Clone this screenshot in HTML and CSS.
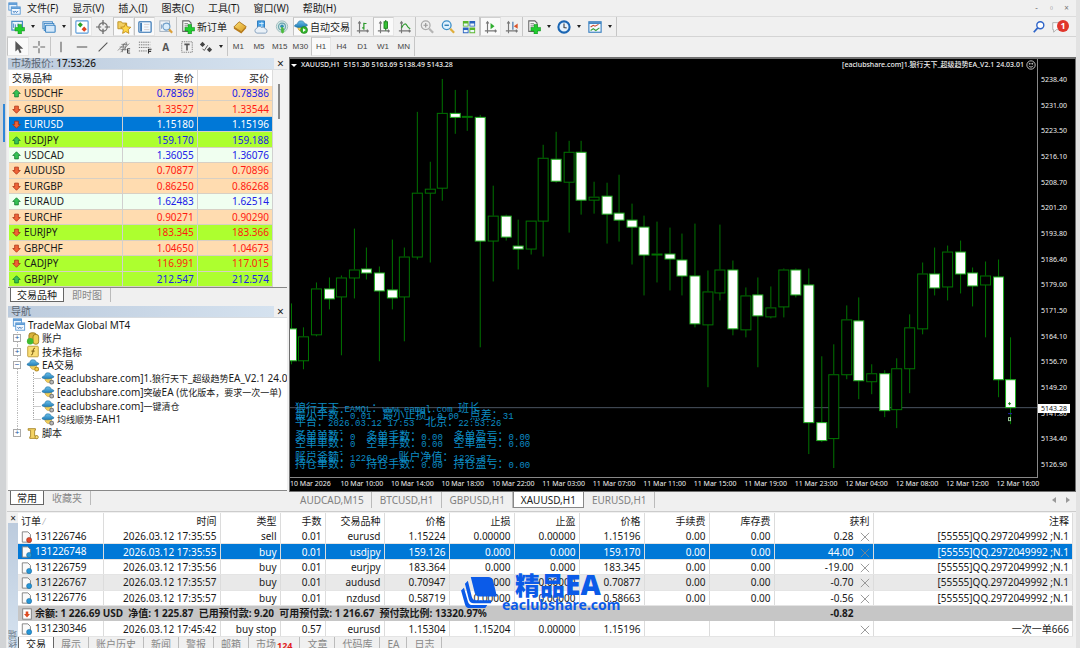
FILE: index.html
```html
<!DOCTYPE html>
<html lang="zh-CN">
<head>
<meta charset="utf-8">
<title>TradeMax Global MT4</title>
<link rel="stylesheet" href="styles.css">
</head>
<body>
<svg class="defs" aria-hidden="true">
  <defs>
    <linearGradient id="gHat" x1="0" y1="0" x2="0" y2="1"><stop offset="0" stop-color="#6cc0ea"/><stop offset="1" stop-color="#1f7db8"/></linearGradient>
    <linearGradient id="gGold" x1="0" y1="0" x2="1" y2="1"><stop offset="0" stop-color="#fbe07a"/><stop offset="1" stop-color="#d99a1c"/></linearGradient>
  </defs>
  <symbol id="plus" viewBox="0 0 16 16"><path d="M8 5h4v3.500h3.500v4H12V16H8v-3.500H4.500v-4H8z" fill="#22cc30" stroke="#0a8a16" stroke-width=".6"/></symbol>
  <symbol id="app" viewBox="0 0 16 16"><rect x="1" y="1" width="10" height="9" fill="#e8f3fd" stroke="#4a8fd0"/><path d="M1 2.500h10" stroke="#4a8fd0" stroke-width="2"/><rect x="4" y="6" width="11" height="9" fill="#f2f8ff" stroke="#4a8fd0"/><path d="M4 7.500h11" stroke="#4a8fd0" stroke-width="2"/><path d="M6 11l1.500 2 1.500-2 1.500 2 2-2" fill="none" stroke="#2c6cb4"/></symbol>
  <symbol id="newchart" viewBox="0 0 16 16"><rect x="1" y="1.500" width="12" height="10" fill="#eef6fd" stroke="#3b85c0" stroke-width="1.300"/><path d="M3 9V4M5 5v3M8 4v3" stroke="#3b85c0"/><use href="#plus"/></symbol>
  <symbol id="profiles" viewBox="0 0 16 16"><rect x="1" y="2" width="11" height="8" fill="#cfe3f5" stroke="#3f86c4"/><rect x="2.500" y="4" width="11" height="8" fill="#e3f0fb" stroke="#3f86c4"/><rect x="4" y="6" width="11" height="8" rx="1" fill="#d4e8fa" stroke="#3f86c4" stroke-width="1.300"/></symbol>
  <symbol id="watch" viewBox="0 0 16 16"><rect x="1" y="1" width="14" height="14" rx="1" fill="#fff" stroke="#5b9bd8" stroke-width="1.300"/><path d="M6 2.500L9 5.500 6 8.500 3 5.500z" fill="#29a329"/><path d="M10.500 7.500l3 3-3 3-3-3z" fill="#e0431c"/></symbol>
  <symbol id="cross" viewBox="0 0 16 16"><circle cx="8" cy="8" r="4.800" fill="none" stroke="#777" stroke-width="1.400"/><path d="M8 0v6M8 10v6M0 8h6M10 8h6" stroke="#666" stroke-width="1.400"/></symbol>
  <symbol id="star" viewBox="0 0 16 16"><path d="M1 2h4l1 1.500h5V10H1z" fill="#f2cf63" stroke="#b98d1e"/><path d="M10 4l1.800 3.800 4 .5-3 2.800.8 4.200-3.600-2-3.600 2 .8-4.200-3-2.800 4-.5z" fill="#ffd84a" stroke="#b98310" stroke-width=".9"/></symbol>
  <symbol id="term" viewBox="0 0 16 16"><rect x="1" y="2" width="14" height="12" rx="1" fill="#f3f9ff" stroke="#2d6fb0" stroke-width="1.300"/><path d="M3.500 3v10" stroke="#2d6fb0" stroke-width="2"/><path d="M7 5h6M7 8h5M7 11h6" stroke="#d5c9c9"/></symbol>
  <symbol id="tester" viewBox="0 0 16 16"><rect x="1" y="1" width="11" height="12" fill="#f0f4f8" stroke="#9ab"/><path d="M3 5v5M5 4v4" stroke="#6b93bd"/><circle cx="8.500" cy="7.500" r="4" fill="#d9ecfb" stroke="#6d9cc8" stroke-width="1.300"/><path d="M11.500 10.500L15 14.500" stroke="#dca03a" stroke-width="2.400"/></symbol>
  <symbol id="order" viewBox="0 0 16 16"><path d="M2 1h7l2.500 2.500V13H2z" fill="#fafafa" stroke="#666" stroke-width="1.200"/><path d="M4 4h4M4 6h5M4 8h3" stroke="#888"/><use href="#plus"/></symbol>
  <symbol id="book" viewBox="0 0 16 16"><path d="M1 8l6-6 8 5.500-5.500 6z" fill="url(#gGold)" stroke="#a8741a"/><path d="M1 8v2l8.500 5.500L15 9.500v-2l-5.500 6z" fill="#b87a18"/></symbol>
  <symbol id="cloud" viewBox="0 0 16 16"><path d="M4 1h8v8H4z" fill="#48a2e6" stroke="#2274b8"/><path d="M9 2v6M6 4h5" stroke="#d9f0ff"/><path d="M3.500 15a2.800 2.800 0 0 1-.3-5.500A3 3 0 0 1 8.500 8.500a3 3 0 0 1 4.200 1.400 2.600 2.600 0 0 1 .3 5.100z" fill="#e9f0f7" stroke="#7f9dbb"/></symbol>
  <symbol id="signal" viewBox="0 0 16 16"><circle cx="8" cy="7.500" r="6.500" fill="#d5e6e6" stroke="#9ab9b9"/><circle cx="8" cy="7.500" r="4" fill="none" stroke="#6ba6ad" stroke-width="1.300"/><circle cx="8" cy="7" r="2" fill="#2f8fb0"/><path d="M8 8c2 2 3 4 1 7-2 0-2-4-1-7z" fill="#4dba3c" stroke="#4dba3c"/></symbol>
  <symbol id="ea" viewBox="0 0 16 16"><path d="M4 6.500c0 4 2 6.500 5 6.500 2 0 3.500-2 3.500-6.500z" fill="#f3cf58" stroke="#b8902c" stroke-width=".7"/><path d="M.5 7C1 5 3 4.800 4 4.500 4.500 1.500 6 1 8 1s3.500.8 4 3c1 .2 3 .5 3.500 2C13 8.500 4 9.500.5 7z" fill="url(#gHat)" stroke="#1c6c9f" stroke-width=".7"/></symbol>
  <symbol id="auto" viewBox="0 0 16 16"><use href="#ea"/><circle cx="11.500" cy="11.500" r="4" fill="#35b52d" stroke="#147414" stroke-width=".6"/><path d="M10.300 9.300v4.400l3.300-2.200z" fill="#fff"/></symbol>
  <symbol id="eagear" viewBox="0 0 16 16"><use href="#ea"/><circle cx="12.500" cy="12.500" r="2.300" fill="#bbb" stroke="#777" stroke-width="1.300"/></symbol>
  <symbol id="eagold" viewBox="0 0 16 16"><use href="#ea"/><circle cx="12.500" cy="12.500" r="2.300" fill="#f5d04c" stroke="#b58a1d" stroke-width="1.300"/></symbol>
  <symbol id="axes" viewBox="0 0 16 16"><path d="M4 2v13M1 12.500h13M2.500 4L4 2l1.500 2M12.500 11l1.500 1.500-1.500 1.500" fill="none" stroke="#777" stroke-width="1.300"/></symbol>
  <symbol id="bars" viewBox="0 0 16 16"><use href="#axes"/><path d="M9 3v8M9 4h3M7 9h2" stroke="#2a9a2a" stroke-width="1.400"/></symbol>
  <symbol id="candle" viewBox="0 0 16 16"><use href="#axes"/><path d="M10 0v12" stroke="#187d18" stroke-width="1.200"/><rect x="8" y="2" width="4" height="7.500" fill="#35c235" stroke="#187d18"/></symbol>
  <symbol id="line" viewBox="0 0 16 16"><use href="#axes"/><path d="M4 9c3-6 5-5 6-3s2 3 4 4" fill="none" stroke="#2a9a2a" stroke-width="1.300"/></symbol>
  <symbol id="zin" viewBox="0 0 16 16"><circle cx="6.500" cy="6" r="5" fill="#eee" stroke="#aaa" stroke-width="1.400"/><path d="M6.500 3.500v5M4 6h5" stroke="#999" stroke-width="1.400"/><path d="M10.500 10l4.500 4.500" stroke="#b5b5b5" stroke-width="2.600"/></symbol>
  <symbol id="zout" viewBox="0 0 16 16"><circle cx="6.500" cy="6" r="5" fill="#dff1fd" stroke="#3c8fc8" stroke-width="1.500"/><path d="M4 6h5" stroke="#2474ae" stroke-width="1.500"/><path d="M10.500 10l4.500 4.500" stroke="#dfae3c" stroke-width="2.600"/></symbol>
  <symbol id="tile" viewBox="0 0 16 16"><path d="M1 1h6.500v6.500H1zM8.500 8.500H15V15H8.500z" fill="#58b52c"/><path d="M8.500 1H15v6.500H8.500zM1 8.500h6.500V15H1z" fill="#2a63c0"/><path d="M2 4h4.500v2.500H2zM9.500 4H14v2.500H9.500zM2 11.500h4.500V14H2zM9.500 11.500H14V14H9.500z" fill="#eef6fb"/></symbol>
  <symbol id="scroll" viewBox="0 0 16 16"><use href="#axes"/><path d="M7.500 3.500v7L12 7z" fill="#2fae2f"/></symbol>
  <symbol id="shift" viewBox="0 0 16 16"><use href="#axes"/><path d="M9 2v9" stroke="#3a6fa8" stroke-width="1.300"/><path d="M14.500 4v6L10 7z" fill="#d9552c"/></symbol>
  <symbol id="clock" viewBox="0 0 16 16"><circle cx="8" cy="8" r="6.400" fill="#e6f3fd" stroke="#1b66b3" stroke-width="2.400"/><path d="M8 4v4.500l3 .5" fill="none" stroke="#444" stroke-width="1.300"/></symbol>
  <symbol id="tpl" viewBox="0 0 16 16"><rect x="1" y="2" width="14" height="12" fill="#f5faff" stroke="#3a80c0" stroke-width="1.300"/><path d="M1 3.500h14" stroke="#3a80c0" stroke-width="2"/><path d="M3 8l3-2 2 1 4-2" fill="none" stroke="#c8482a" stroke-width="1.200"/><path d="M3 12l3-2 3 2 4-3" fill="none" stroke="#38a038" stroke-width="1.200"/></symbol>
  <symbol id="cursor" viewBox="0 0 16 16"><path d="M5 1v12l3-2.500L10 15l2-1-2-4h4z" fill="#555"/></symbol>
  <symbol id="cross2" viewBox="0 0 16 16"><path d="M8 1v5.500M8 9.500V15M1 8h5.500M9.500 8H15" stroke="#666" stroke-width="1.300"/></symbol>
  <symbol id="vline" viewBox="0 0 16 16"><path d="M8 2v12" stroke="#555" stroke-width="1.200"/></symbol>
  <symbol id="hline" viewBox="0 0 16 16"><path d="M2 8h12" stroke="#555" stroke-width="1.200"/></symbol>
  <symbol id="trend" viewBox="0 0 16 16"><path d="M3 13L13 3" stroke="#555" stroke-width="1.200"/></symbol>
  <symbol id="chan" viewBox="0 0 16 16"><path d="M1 12L11 2M4 14L14 4M3 8h6M5 5h7M4 11h7M6 14L8 4M9 12l2-9" stroke="#666" stroke-width=".8"/><path d="M15 10h-3v5h3M12 12.500h2.500" fill="none" stroke="#333"/></symbol>
  <symbol id="fibo" viewBox="0 0 16 16"><path d="M1 2.500h13M1 5.500h13M1 8.500h13M1 12.500h9" stroke="#666" stroke-dasharray="1.500 1"/><path d="M12 15.500V10.500h3.500M12 13h3" fill="none" stroke="#333" stroke-width="1.200"/></symbol>
  <symbol id="tbox" viewBox="0 0 16 16"><rect x="2" y="2" width="12" height="12" fill="none" stroke="#777" stroke-dasharray="1.500 1"/><path d="M5 5h6M8 5v7" stroke="#555" stroke-width="1.800"/></symbol>
  <symbol id="arrows" viewBox="0 0 16 16"><path d="M4 2l3 3-3 3-3-3zM12 8l3 3-3 3-3-3z" fill="#444"/><path d="M4 10l2 2 4-6" fill="none" stroke="#444"/></symbol>
  <symbol id="search" viewBox="0 0 16 16"><circle cx="9.500" cy="6" r="4" fill="#fff" stroke="#2e64c8" stroke-width="1.600"/><path d="M6.500 9L2 14" stroke="#2e64c8" stroke-width="2"/></symbol>
  <symbol id="bellicon" viewBox="0 0 16 16"><path d="M2 3h9v8H6l-3 3v-3H2z" fill="#fafafa" stroke="#aaa"/></symbol>
  <symbol id="up" viewBox="0 0 12 12"><path d="M6 1l5 5H8.500v4.500h-5V6H1z" fill="#36c255" stroke="#12772b"/></symbol>
  <symbol id="down" viewBox="0 0 12 12"><path d="M6 11L1 6h2.500V1.500h5V6H11z" fill="#ef6338" stroke="#a92a0c"/></symbol>
  <symbol id="acct" viewBox="0 0 16 16"><rect x="3" y="1" width="9" height="12" rx="3" fill="#d8b13a" stroke="#8d6f12"/><rect x="8" y="3" width="7" height="12" rx="3" fill="#f0ce50" stroke="#8d6f12"/><circle cx="4.500" cy="11.500" r="4" fill="#41bb33"/></symbol>
  <symbol id="func" viewBox="0 0 16 16"><rect x="1.500" y="1.500" width="13" height="13" rx="1" fill="#fadf78" stroke="#b58f24"/><path d="M10.500 4c-2-.5-2 1-2.500 4s-.8 5-2.500 4M6 7.500h4" fill="none" stroke="#70520c" stroke-width="1.200"/></symbol>
  <symbol id="script" viewBox="0 0 16 16"><path d="M2 2h9v2h-1v7h3v3H4v-2h1V4H2z" fill="#f3d264" stroke="#a17e1c"/><circle cx="12.500" cy="12.500" r="2" fill="#f7df7c" stroke="#a17e1c"/></symbol>
  <symbol id="docbuy" viewBox="0 0 14 14"><path d="M1.500 1H8l3 3v9H1.500z" fill="#fafafa" stroke="#777"/><circle cx="9.500" cy="10.500" r="3" fill="#2596d8" stroke="#0f6395" stroke-width=".6"/></symbol>
  <symbol id="docsell" viewBox="0 0 14 14"><path d="M1.500 1H8l3 3v9H1.500z" fill="#fafafa" stroke="#777"/><circle cx="9.500" cy="10.500" r="3" fill="#e0482c" stroke="#8d220e" stroke-width=".6"/></symbol>
  <symbol id="bal" viewBox="0 0 14 14"><rect x="2" y="1" width="10" height="12" fill="#fff" stroke="#777"/><path d="M7 11L3.500 7H5.500V4h3v3h2z" fill="#dd4a20"/></symbol>
  <symbol id="x" viewBox="0 0 12 12"><path d="M1 1l10 10M11 1L1 11" stroke="#888" stroke-width="1"/></symbol>
</svg>

<div class="gutter"><i></i></div>
<div class="app">
  <header>
    <nav class="menu">
      <svg class="ic"><use href="#app"/></svg>
      <button>文件(F)</button><button>显示(V)</button><button>插入(I)</button><button>图表(C)</button><button>工具(T)</button><button>窗口(W)</button><button>帮助(H)</button>
      <span class="winbtns"><button>-</button><button>▫</button><button>×</button></span>
    </nav>
    <div class="toolbar">
      <div class="group g-file"><button class="drop" aria-label="新图表"><svg class="ic"><use href="#newchart"/></svg></button><button class="drop" aria-label="配置"><svg class="ic"><use href="#profiles"/></svg></button></div>
      <div class="group g-panels"><button class="on" aria-label="市场报价"><svg class="ic"><use href="#watch"/></svg></button><button aria-label="数据窗口"><svg class="ic"><use href="#cross"/></svg></button><button class="on" aria-label="导航"><svg class="ic"><use href="#star"/></svg></button><button class="on" aria-label="终端"><svg class="ic"><use href="#term"/></svg></button><button aria-label="测试"><svg class="ic"><use href="#tester"/></svg></button></div>
      <div class="group g-trade"><button class="wide"><svg class="ic"><use href="#order"/></svg>新订单</button><button aria-label="编辑器"><svg class="ic"><use href="#book"/></svg></button><button aria-label="云"><svg class="ic"><use href="#cloud"/></svg></button><button aria-label="信号"><svg class="ic"><use href="#signal"/></svg></button><button class="wide on"><svg class="ic"><use href="#auto"/></svg>自动交易</button></div>
      <div class="group g-three"><button aria-label="柱状图"><svg class="ic"><use href="#bars"/></svg></button><button class="on" aria-label="蜡烛图"><svg class="ic"><use href="#candle"/></svg></button><button aria-label="折线图"><svg class="ic"><use href="#line"/></svg></button></div>
      <div class="group g-three"><button aria-label="放大"><svg class="ic"><use href="#zin"/></svg></button><button aria-label="缩小"><svg class="ic"><use href="#zout"/></svg></button><button aria-label="平铺"><svg class="ic"><use href="#tile"/></svg></button></div>
      <div class="group g-two"><button class="on" aria-label="自动滚动"><svg class="ic"><use href="#scroll"/></svg></button><button aria-label="图表平移"><svg class="ic"><use href="#shift"/></svg></button></div>
      <div class="group g-drops"><button class="drop" aria-label="指标"><svg class="ic"><use href="#order"/></svg></button><button class="drop" aria-label="周期"><svg class="ic"><use href="#clock"/></svg></button><button class="drop" aria-label="模板"><svg class="ic"><use href="#tpl"/></svg></button></div>
      <div class="right"><button aria-label="搜索"><svg class="ic"><use href="#search"/></svg></button><button class="bell" aria-label="通知"><svg class="ic"><use href="#bellicon"/></svg><span class="badge">1</span></button></div>
    </div>
    <div class="toolbar second">
      <div class="group g-ptr"><button class="on" aria-label="光标"><svg class="ic"><use href="#cursor"/></svg></button><button aria-label="十字线"><svg class="ic"><use href="#cross2"/></svg></button></div>
      <div class="group g-draw"><button aria-label="垂直线"><svg class="ic"><use href="#vline"/></svg></button><button aria-label="水平线"><svg class="ic"><use href="#hline"/></svg></button><button aria-label="趋势线"><svg class="ic"><use href="#trend"/></svg></button><button aria-label="通道"><svg class="ic"><use href="#chan"/></svg></button><button aria-label="斐波那契"><svg class="ic"><use href="#fibo"/></svg></button><button class="letter">A</button><button aria-label="文本标签"><svg class="ic"><use href="#tbox"/></svg></button><button class="drop" aria-label="箭头"><svg class="ic"><use href="#arrows"/></svg></button></div>
      <div class="group g-tf"><button>M1</button><button>M5</button><button>M15</button><button>M30</button><button class="on">H1</button><button>H4</button><button>D1</button><button>W1</button><button>MN</button></div>
    </div>
  </header>

  <div class="workspace">
    <aside>
      <section class="panel market">
        <h2><span>市场报价: <b>17:53:26</b></span><button aria-label="关闭">×</button></h2>
        <div class="quotes">
          <table>
            <thead><tr><th>交易品种</th><th>卖价</th><th>买价</th></tr></thead>
            <tbody>
              <tr class="peach up"><td><svg><use href="#up"/></svg>USDCHF</td><td>0.78369</td><td>0.78386</td></tr>
              <tr class="peach dn"><td><svg><use href="#down"/></svg>GBPUSD</td><td>1.33527</td><td>1.33544</td></tr>
              <tr class="sel"><td><svg><use href="#down"/></svg>EURUSD</td><td>1.15180</td><td>1.15196</td></tr>
              <tr class="lime up"><td><svg><use href="#up"/></svg>USDJPY</td><td>159.170</td><td>159.188</td></tr>
              <tr class="mint up"><td><svg><use href="#up"/></svg>USDCAD</td><td>1.36055</td><td>1.36076</td></tr>
              <tr class="peach dn"><td><svg><use href="#down"/></svg>AUDUSD</td><td>0.70877</td><td>0.70896</td></tr>
              <tr class="peach dn"><td><svg><use href="#down"/></svg>EURGBP</td><td>0.86250</td><td>0.86268</td></tr>
              <tr class="mint up"><td><svg><use href="#up"/></svg>EURAUD</td><td>1.62483</td><td>1.62514</td></tr>
              <tr class="peach dn"><td><svg><use href="#down"/></svg>EURCHF</td><td>0.90271</td><td>0.90290</td></tr>
              <tr class="lime dn"><td><svg><use href="#down"/></svg>EURJPY</td><td>183.345</td><td>183.366</td></tr>
              <tr class="peach dn"><td><svg><use href="#down"/></svg>GBPCHF</td><td>1.04650</td><td>1.04673</td></tr>
              <tr class="lime dn"><td><svg><use href="#down"/></svg>CADJPY</td><td>116.991</td><td>117.015</td></tr>
              <tr class="lime up"><td><svg><use href="#up"/></svg>GBPJPY</td><td>212.547</td><td>212.574</td></tr>
            </tbody>
          </table>
          <div class="scroll"><i></i></div>
        </div>
        <div class="tabs"><button class="active">交易品种</button><button>即时图</button></div>
      </section>
      <section class="panel navigator">
        <h2><span>导航</span><button aria-label="关闭">×</button></h2>
        <div class="treebox">
          <ul class="tree">
            <li><svg class="ic"><use href="#app"/></svg>TradeMax Global MT4</li>
            <li class="l1"><i class="box">+</i><svg class="ic"><use href="#acct"/></svg>账户</li>
            <li class="l1"><i class="box">+</i><svg class="ic"><use href="#func"/></svg>技术指标</li>
            <li class="l1"><i class="box">−</i><svg class="ic"><use href="#eagold"/></svg>EA交易</li>
            <li class="l2"><svg class="ic"><use href="#eagear"/></svg><span>[eaclubshare.com]1.<small>狼行天下</small>_<small>超级趋势</small>EA_V2.1 24.0</span></li>
            <li class="l2"><svg class="ic"><use href="#eagear"/></svg><span>[eaclubshare.com]<small>突破</small>EA (<small>优化版本，要求一次一单</small>)</span></li>
            <li class="l2"><svg class="ic"><use href="#eagear"/></svg><span>[eaclubshare.com]<small>一键清仓</small></span></li>
            <li class="l2 last"><svg class="ic"><use href="#eagear"/></svg><span><small>均线顺势</small>-EAH1</span></li>
            <li class="l1 end"><i class="box">+</i><svg class="ic"><use href="#script"/></svg>脚本</li>
          </ul>
        </div>
        <div class="tabs"><button class="active">常用</button><button>收藏夹</button></div>
      </section>
    </aside>

    <main>
      <div class="chart">
        <div class="plot">
          <svg id="candles" viewBox="290 59 748 419" preserveAspectRatio="none"></svg>
          <div class="caption"><span><i class="tri"></i>XAUUSD,H1&nbsp; 5151.30 5163.69 5138.49 5143.28</span><span>[eaclubshare.com]1.狼行天下_超级趋势EA_V2.1 24.03.01 <svg viewBox="0 0 12 12"><circle cx="6" cy="6" r="5" fill="none" stroke="#ddd"/><path d="M3.500 7c1 2 4 2 5 0M4 4h1v1H4zM7 4h1v1H7z" fill="none" stroke="#ddd"/></svg></span></div>
          <pre class="comment">狼行天下<samp> EAMQL</samp>：<samp>www.eamql.com </samp>班长
最小手数：<samp>0.01  </samp>最小止损：<samp>0.00  </samp>点差：<samp>31</samp>
平台：<samp>2026.03.12 17:53  </samp>北京：<samp>22:53:26</samp>
<samp>---------</samp>
多单单数：<samp>0  </samp>多单手数：<samp>0.00  </samp>多单盈亏：<samp>0.00</samp>
空单单数：<samp>0  </samp>空单手数：<samp>0.00  </samp>空单盈亏：<samp>0.00</samp>
<samp>---------</samp>
账户金额：<samp>1226.69  </samp>账户净值：<samp>1225.87</samp>
持仓单数：<samp>0  </samp>持仓手数：<samp>0.00  </samp>持仓盈亏：<samp>0.00</samp></pre>
        </div>
        <div class="prices"><span>5238.40</span><span>5231.00</span><span>5223.50</span><span>5216.10</span><span>5208.70</span><span>5201.20</span><span>5193.80</span><span>5186.40</span><span>5179.00</span><span>5171.50</span><span>5164.10</span><span>5156.70</span><span>5149.20</span><span>5141.80</span><span>5134.40</span><span>5126.90</span><b>5143.28</b></div>
        <div class="times"><span>10 Mar 2026</span><span>10 Mar 10:00</span><span>10 Mar 14:00</span><span>10 Mar 18:00</span><span>10 Mar 22:00</span><span>11 Mar 03:00</span><span>11 Mar 07:00</span><span>11 Mar 11:00</span><span>11 Mar 15:00</span><span>11 Mar 19:00</span><span>11 Mar 23:00</span><span>12 Mar 04:00</span><span>12 Mar 08:00</span><span>12 Mar 12:00</span><span>12 Mar 16:00</span></div>
      </div>
      <div class="charttabs"><button>AUDCAD,M15</button><button>BTCUSD,H1</button><button>GBPUSD,H1</button><button class="active">XAUUSD,H1</button><button>EURUSD,H1</button><span><i class="prev"></i><i class="next"></i></span></div>
    </main>
  </div>

  <section class="terminal">
    <div class="side"><button aria-label="关闭">×</button><span>终端</span></div>
    <div class="orders">
      <table>
        <colgroup><col class="c-id"><col class="c-time"><col class="c-type"><col class="c-lot"><col class="c-sym"><col class="c-num"><col class="c-num"><col class="c-num"><col class="c-num"><col class="c-num"><col class="c-num"><col class="c-pl"><col></colgroup>
        <thead><tr><th>订单 <small>⁄</small></th><th>时间</th><th>类型</th><th>手数</th><th>交易品种</th><th>价格</th><th>止损</th><th>止盈</th><th>价格</th><th>手续费</th><th>库存费</th><th>获利</th><th>注释</th></tr></thead>
        <tbody>
          <tr><td><svg><use href="#docsell"/></svg>131226746</td><td>2026.03.12 17:35:55</td><td>sell</td><td>0.01</td><td>eurusd</td><td>1.15224</td><td>0.00000</td><td>0.00000</td><td>1.15196</td><td>0.00</td><td>0.00</td><td>0.28<svg><use href="#x"/></svg></td><td>[55555]QQ.2972049992 ;N.1</td></tr>
          <tr class="sel"><td><svg><use href="#docbuy"/></svg>131226748</td><td>2026.03.12 17:35:55</td><td>buy</td><td>0.01</td><td>usdjpy</td><td>159.126</td><td>0.000</td><td>0.000</td><td>159.170</td><td>0.00</td><td>0.00</td><td>44.00<svg><use href="#x"/></svg></td><td>[55555]QQ.2972049992 ;N.1</td></tr>
          <tr><td><svg><use href="#docbuy"/></svg>131226759</td><td>2026.03.12 17:35:56</td><td>buy</td><td>0.01</td><td>eurjpy</td><td>183.364</td><td>0.000</td><td>0.000</td><td>183.345</td><td>0.00</td><td>0.00</td><td>-19.00<svg><use href="#x"/></svg></td><td>[55555]QQ.2972049992 ;N.1</td></tr>
          <tr class="alt"><td><svg><use href="#docbuy"/></svg>131226767</td><td>2026.03.12 17:35:57</td><td>buy</td><td>0.01</td><td>audusd</td><td>0.70947</td><td>0.00000</td><td>0.00000</td><td>0.70877</td><td>0.00</td><td>0.00</td><td>-0.70<svg><use href="#x"/></svg></td><td>[55555]QQ.2972049992 ;N.1</td></tr>
          <tr><td><svg><use href="#docbuy"/></svg>131226776</td><td>2026.03.12 17:35:57</td><td>buy</td><td>0.01</td><td>nzdusd</td><td>0.58719</td><td>0.00000</td><td>0.00000</td><td>0.58663</td><td>0.00</td><td>0.00</td><td>-0.56<svg><use href="#x"/></svg></td><td>[55555]QQ.2972049992 ;N.1</td></tr>
          <tr class="balance"><td colspan="11"><svg><use href="#bal"/></svg>余额: 1 226.69 USD&nbsp; 净值: 1 225.87&nbsp; 已用预付款: 9.20&nbsp; 可用预付款: 1 216.67&nbsp; 预付款比例: 13320.97%</td><td>-0.82<svg></svg></td><td></td></tr>
          <tr><td><svg><use href="#docbuy"/></svg>131230346</td><td>2026.03.12 17:45:42</td><td>buy stop</td><td>0.57</td><td>eurusd</td><td>1.15304</td><td>1.15204</td><td>0.00000</td><td>1.15196</td><td></td><td></td><td><svg><use href="#x"/></svg></td><td>一次一单666</td></tr>
        </tbody>
      </table>
      <div class="tabs"><button class="active">交易</button><button>展示</button><button>账户历史</button><button>新闻</button><button>警报</button><button>邮箱</button><button>市场<sub>124</sub></button><button>文章</button><button>代码库</button><button>EA</button><button>日志</button></div>
    </div>
    <div class="watermark">
      <svg viewBox="0 0 38 34"><path d="M10 1h18q4 0 5 4l4 16H19q-4 0-5-4z" fill="#0b5be8"/><path d="M7 5l4 16q1 4 5 4h15v3H13q-4 0-5-4L4 8z" fill="#0b5be8"/><path d="M3 12l4 14q1 4 5 4h15l-2 3H9q-4 0-5-4L0 15z" fill="#0b5be8"/></svg>
      <div><strong>精品<em>EA</em></strong><span>eaclubshare.com</span></div>
    </div>
  </section>
</div>
<script src="chart.js"></script>
</body>
</html>
```
FILE: styles.css
```css
* { box-sizing: border-box; }
body {
  margin: 0; display: flex; height: 100vh; overflow: hidden;
  background: #f0f0f0; color: #1a1a1a;
  font: 10px/12px "Noto Sans", "Noto Sans CJK SC", sans-serif;
}
button { border: 0; padding: 0; background: none; font: inherit; color: inherit; white-space: nowrap; }
.defs { position: absolute; width: 0; height: 0; }
.ic { width: 14px; height: 14px; flex: none; display: block; }

.gutter { flex: none; width: 7px; padding: 104px 0 0 3px; background: #d2d4d6; border-right: 1px solid #e8e8e8; }
.gutter i { display: block; width: 2px; height: 38px; background: #2f86d8; }
.app { flex: 1; min-width: 0; display: flex; flex-direction: column; border-right: 4px solid #e2e2e2; }

.menu { display: flex; align-items: center; gap: 14px; height: 17px; padding-left: 1px; border-bottom: 1px solid #dcdcdc; }
.menu .ic { margin-right: -8px; width: 13px; height: 13px; }
.winbtns { margin-left: auto; display: flex; color: #777; font-size: 8px; padding-right: 2px; }
.winbtns button { width: 15px; }

.toolbar { display: flex; height: 20px; padding-left: 2px; border-bottom: 1px solid #d4d4d4; }
.toolbar.second { height: 19px; padding-left: 0; border-bottom: 0; }
.group { display: flex; flex: none; border-right: 1px solid #c6c6c6; }
.toolbar button { flex: 1; display: flex; align-items: center; justify-content: center; border: 1px solid transparent; }
.toolbar .on { background: #fafafa; border-color: #d0d0d0 #e6e6e6 #e6e6e6 #c4c4c4; }
.toolbar .drop { justify-content: flex-start; padding-left: 1px; gap: 6px; }
.drop::after { content: ""; border: 2px solid transparent; border-top: 3px solid #222; border-bottom: 0; }
.toolbar .wide { gap: 2px; flex: none; }
.g-file { width: 62px; }
.g-panels { width: 106px; }
.g-trade { width: 175px; padding-left: 2px; }
.g-trade .wide { padding: 0 1px; }
.g-trade .wide.on { padding: 0; }
.g-three { width: 64px; }
.g-two { width: 43px; }
.g-drops { width: 94px; padding-left: 2px; }
.g-ptr { width: 44px; }
.g-draw { width: 177px; }
.g-draw .drop { flex: none; width: 30px; }
.g-tf { width: 187px; font: 8px/10px "Liberation Sans", sans-serif; color: #444; }
.letter { font-weight: bold; color: #555; }
.right { margin-left: auto; display: flex; gap: 3px; padding-right: 6px; }
.toolbar .right button { flex: none; width: 16px; }
.toolbar .right .bell { position: relative; width: 20px; justify-content: flex-start; }
.badge { position: absolute; right: 0; top: 2px; width: 12px; height: 12px; border-radius: 6px; background: #e0352b; color: #fff; font-weight: bold; font-size: 9px; text-align: center; }

.workspace { flex: 1; min-height: 0; display: flex; }
aside { flex: none; width: 282px; padding: 2px 2px 6px 1px; display: flex; flex-direction: column; gap: 4px; }
.panel { display: flex; flex-direction: column; }
.panel h2 { display: flex; align-items: center; margin: 0; height: 12px; font: inherit; color: #5a6470; border-bottom: 1px solid #d8dce0; }
.panel h2 span { flex: 1; height: 11px; line-height: 11px; padding-left: 3px; background: linear-gradient(90deg, #bccbdd, #d5e2ef); }
.panel h2 b { font-weight: 500; color: #222; }
.panel h2 button { width: 13px; color: #222; font-size: 12px; line-height: 10px; }
.quotes { display: flex; border-bottom: 1px solid #888; }
table { border-collapse: collapse; table-layout: fixed; }
.quotes table { width: 264px; height: 217px; margin-left: 1px; }
th, td { padding: 0 3px; text-align: right; font-weight: normal; line-height: 12px; white-space: nowrap; overflow: hidden; border-right: 1px solid #dcdcdc; }
th { height: 16px; background: #fff; }
.quotes th:first-child, .quotes td:first-child { width: 113px; text-align: left; }
.quotes td { border-bottom: 1px solid #d8d0c4; border-right-color: #d0d0d0; }
.quotes svg { width: 9px; height: 9px; margin-right: 3px; vertical-align: -1px; }
.peach { background: #ffdcb0; }
.lime { background: #adff2f; }
.mint { background: #f0fff0; }
.up td + td { color: #2020e8; }
.dn td + td { color: #ff1a10; }
.sel, .orders .sel { background: #0078d7; color: #fff; }
.scroll { flex: 1; padding: 14px 0 0 5px; background: #f3f3f3; }
.scroll i { display: block; width: 2px; height: 35px; background: #8a8a8a; }
.tabs { display: flex; height: 14px; color: #888; }
.tabs button { padding: 0 8px; border-right: 1px solid #bbb; }
.tabs .active { background: #fff; color: #222; border: 1px solid #666; border-top: 0; padding: 0 6px; }
.panel .tabs { padding-left: 2px; }

.navigator { flex: 1; min-height: 0; }
.treebox { flex: 1; min-height: 0; background: #fff; border-bottom: 1px solid #888; overflow: hidden; }
.tree { list-style: none; margin: 0; padding: 0; height: 122px; display: grid; grid-auto-rows: 1fr; }
.tree li { display: flex; align-items: center; gap: 2px; min-height: 0; padding-left: 4px; white-space: nowrap; position: relative; }
.tree li::before { content: ""; position: absolute; left: 9px; top: 0; bottom: 0; border-left: 1px dotted #bbb; }
.tree li:first-child::before { display: none; }
.tree .end::before { bottom: 50%; }
.tree .ic { height: 13px; }
.tree small { font-size: 9px; }
.tree .l1 { padding-left: 5px; }
.tree .l1 .ic { margin-left: 3px; }
.tree .l2 { padding-left: 33px; }
.tree .l2::after { content: ""; position: absolute; left: 25px; top: 0; height: 100%; width: 7px; border-left: 1px dotted #aaa; background: linear-gradient(#ccc, #ccc) 0 50% / 7px 1px no-repeat; }
.tree .last::after { height: 50%; background-position: 0 100%; }
.box { position: relative; width: 8px; height: 8px; border: 1px solid #aaa; background: #fff; color: #2452a0; font: 8px/6px "Liberation Sans", sans-serif; text-align: center; }

main { flex: 1; min-width: 0; display: flex; flex-direction: column; }
.chart {
  flex: 1; min-height: 0; display: grid; grid-template: 1fr 13px / 1fr 37px;
  background: #000; color: #f0f0f0; margin-top: 1px;
  border: 1px solid #707070; border-width: 2px 1px 1px;
  font-size: 7px; line-height: 10px;
}
.plot { position: relative; border-right: 1px solid #888; border-bottom: 1px solid #888; min-height: 0; }
#candles { position: absolute; width: 100%; height: 100%; }
.caption { position: relative; display: flex; justify-content: space-between; padding: 1px 1px 0 1px; font-weight: 500; }
.caption span { display: flex; align-items: center; }
.caption svg { width: 10px; height: 10px; margin-left: 2px; }
.tri { border: 3px solid transparent; border-top: 3px solid #fff; border-bottom: 0; margin-right: 4px; }
.comment { position: absolute; left: 5px; bottom: 10px; margin: 0; color: #0c8cc4; font: 11px/7px "Noto Sans CJK SC", sans-serif; }
.comment samp { font: 9px/0 "Liberation Mono", monospace; }
.prices { position: relative; display: flex; flex-direction: column; justify-content: space-between; padding: 16px 0 8px 3px; }
.prices b { position: absolute; left: 0; top: 345px; width: 32px; height: 9px; padding-left: 3px; line-height: 9px; background: #fff; color: #111; font-weight: normal; }
.times { grid-column: 1 / 3; display: flex; padding-right: 28px; }
.times span { flex: 1; min-width: 0; white-space: nowrap; line-height: 12px; }
.charttabs { display: flex; height: 19px; padding-bottom: 3px; color: #808080; }
.charttabs button { padding: 0 7px 0 8px; border-right: 1px solid #bbb; }
.charttabs button:first-child { padding-left: 11px; }
.charttabs .active { background: #fff; color: #222; border: 1px solid #888; border-top: 0; padding: 0 7px; }
.charttabs span { margin-left: auto; display: flex; align-items: center; gap: 10px; padding-right: 6px; }
.prev, .next { border: 3px solid transparent; }
.prev { border-right: 4px solid #999; border-left: 0; }
.next { border-left: 4px solid #999; border-right: 0; }

.terminal { position: relative; flex: none; height: 137px; display: flex; padding: 1px 3px 0 1px; border-top: 1px solid #ccc; overflow: hidden; }
.side { width: 10px; display: flex; flex-direction: column; overflow: hidden; }
.side button { height: 10px; line-height: 8px; font-size: 10px; }
.side span { flex: 1; writing-mode: vertical-rl; transform: rotate(180deg); color: #6a7888; background: linear-gradient(#d5e2ef, #bccbdd); line-height: 10px; font-size: 9px; }
.orders { flex: 1; min-width: 0; }
.orders table { width: 100%; height: 124px; background: #fff; border-bottom: 1px solid #888; }
.orders th:first-child, .orders td:first-child { text-align: left; }
.orders td { border-bottom: 1px solid #e4e4e4; }
.orders td svg { width: 12px; height: 12px; vertical-align: -3px; }
.orders td:first-child svg { margin-right: 2px; }
.orders td:nth-last-child(2) svg { width: 10px; height: 10px; margin-left: 6px; vertical-align: -2px; }
.orders small { color: #aaa; }
.alt { background: #e9e9e9; }
.balance { background: #c6c6c6; }
.orders .balance td { font-weight: bold; border-color: #c6c6c6; }
.c-id { width: 85px; }
.c-time { width: 117px; }
.c-type { width: 60px; }
.c-lot { width: 45px; }
.c-sym { width: 59px; }
.c-num { width: 65px; }
.c-pl { width: 99px; }
.orders .tabs button { padding: 0 7px; }
.orders sub { color: #e02020; font-weight: bold; font-size: 9px; vertical-align: -1px; margin-left: 1px; line-height: 8px; }

.watermark { position: absolute; left: 454px; top: 59px; display: flex; gap: 4px; color: #0b5be8; font-weight: bold; }
.watermark svg { width: 37px; height: 33px; margin-top: 5px; }
.watermark div { display: flex; flex-direction: column; }
.watermark strong { font-size: 25px; line-height: 26px; padding-left: 13px; }
.watermark em { font-style: normal; font-size: 28px; }
.watermark span { font-size: 14px; line-height: 14px; }
```
FILE: chart.js
```js
// Each candle: centre x, high, body top, body bottom, low, filled (1) or hollow (0)
const candles = [
  [291,304,329,361,365,1],[303,328,337,361,370,0],[316,283,289,335,337,0],[329,278,289,299,310,1],
  [341,276,278,297,356,0],[354,229,270,278,299,0],[366,248,269,273,280,1],[379,267,273,291,362,1],
  [392,240,290,298,310,1],[404,248,257,297,342,0],[417,112,193,257,260,0],[430,162,189,193,263,0],
  [442,79,113,188,201,0],[455,90,113,117,134,1],[467,90,116,117,131,0],[480,115,117,241,348,1],
  [493,186,216,241,282,0],[506,215,216,237,241,1],[518,220,246,249,270,1],[531,221,221,249,255,0],
  [543,145,158,221,257,0],[556,132,159,181,183,1],[569,141,152,182,233,0],[581,141,152,200,215,1],
  [594,182,197,200,214,0],[607,183,196,214,244,1],[619,175,213,220,242,1],[632,204,220,227,265,1],
  [644,216,227,255,296,1],[657,222,254,255,283,0],[670,228,254,259,291,1],[682,234,260,276,296,1],
  [695,224,276,324,328,1],[708,271,292,325,388,0],[720,225,270,293,301,0],[733,261,270,329,336,1],
  [746,288,296,330,338,0],[758,278,295,316,368,1],[771,287,308,317,319,0],[784,269,270,307,318,0],
  [796,269,270,295,298,1],[809,269,285,423,455,1],[822,357,423,441,443,1],[834,345,375,439,469,0],
  [847,306,320,375,380,0],[859,298,321,381,400,1],[872,365,374,382,395,0],[885,371,374,411,418,1],
  [897,359,369,410,429,0],[910,315,328,369,394,0],[923,263,274,329,335,0],[935,248,274,288,296,1],
  [948,246,252,287,301,0],[961,241,252,274,294,1],[973,268,273,286,307,1],[986,262,276,285,338,0],
  [999,260,277,380,398,1],[1011,338,380,408,425,1]
];
const parts = ['<path d="M290 408.5h748" stroke="#4a5460"/>'];
for (const [x, high, top, bottom, low, filled] of candles) {
  const c = x + 0.5;
  parts.push(`<path d="M${c} ${high}V${top}M${c} ${bottom}V${low}" stroke="#007400"/>`);
  parts.push(`<rect x="${c - 5}" y="${top + 0.5}" width="10" height="${bottom - top}" fill="${filled ? '#fff' : '#000'}" stroke="${filled ? '#20b020' : '#007400'}"/>`);
}
parts.push('<path d="M1009 404.500h3M1010.500 403v3" stroke="#108010"/><path d="M1009 414.500h4" stroke="#2020b0"/><rect x="1009.500" y="418.500" width="2" height="3" fill="none" stroke="#9c9"/>');
document.getElementById('candles').innerHTML = parts.join('');
```
